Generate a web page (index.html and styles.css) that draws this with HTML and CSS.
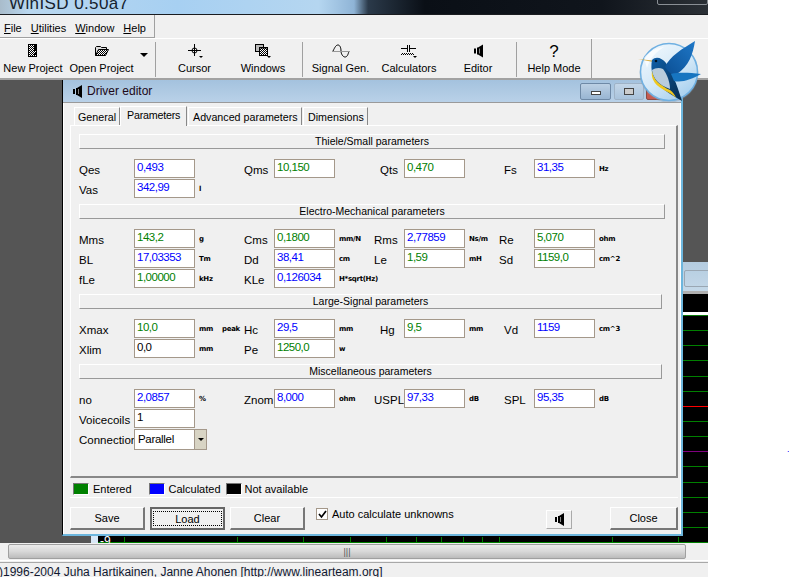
FILE: index.html
```html
<!DOCTYPE html>
<html lang="en">
<head>
<meta charset="utf-8">
<title>WinISD</title>
<link rel="stylesheet" href="styles.css">
</head>
<body>
<svg class="defs" width="0" height="0" aria-hidden="true">
  <defs>
    <pattern id="dither" width="2" height="2" patternUnits="userSpaceOnUse">
      <rect width="2" height="2" fill="#fff"/>
      <rect width="1" height="1" fill="#000"/>
      <rect x="1" y="1" width="1" height="1" fill="#000"/>
    </pattern>
    <g id="speaker">
      <path d="M0 4h2v5H0zM3 3h1l5-3v13l-5-3H3z" fill="#000"/>
      <path d="M5 4h1v5H5z" fill="#888"/>
    </g>
  </defs>
</svg>
<div class="app">
  <div class="titlebar"><span class="title-text">WinISD 0.50a7</span><span class="title-ctl"></span></div>
  <div class="menubar">
    <div class="menu">
      <span><u>F</u>ile</span><span><u>U</u>tilities</span><span><u>W</u>indow</span><span><u>H</u>elp</span>
    </div>
  </div>
  <div class="toolrow">
    <div class="toolbar">
      <div class="tool w-new">
        <svg class="ico" width="16" height="14" viewBox="0 0 16 14"><rect x="3.500" y="0.500" width="8" height="12" fill="url(#dither)" stroke="#000"/><path d="M9 1h2v6H9zM9 9h2v2H9z" fill="#000"/></svg>
        <span>New Project</span>
      </div>
      <div class="tool w-open">
        <svg class="ico" width="16" height="14" viewBox="0 0 16 14"><path d="M1.500 11.500V3.500l1-1h4l1 1h5v2" fill="#ddd" stroke="#000"/><path d="M1.500 11.500l3-6h10l-3 6z" fill="url(#dither)" stroke="#000"/></svg>
        <span>Open Project</span>
      </div>
      <div class="tool-arrow"><i class="caret"></i></div>
      <div class="tool w-cursor sep">
        <svg class="ico" width="16" height="14" viewBox="0 0 16 14"><path d="M7.500 0v12M1 6.500h13" stroke="#000"/><circle cx="7.500" cy="6.500" r="2.500" fill="none" stroke="#000"/><path d="M12 12h4l-2 2z" fill="#000"/></svg>
        <span>Cursor</span>
      </div>
      <div class="tool w-windows">
        <svg class="ico" width="16" height="14" viewBox="0 0 16 14"><rect x="0.500" y="0.500" width="8" height="7" fill="#bbb" stroke="#000"/><rect x="4.500" y="3.500" width="8" height="8" fill="url(#dither)" stroke="#000"/><path d="M4 3.500h9V4.500H4z" fill="#000"/><path d="M12 12h4l-2 2z" fill="#000"/></svg>
        <span>Windows</span>
      </div>
      <div class="tool w-signal sep">
        <svg class="ico" width="18" height="14" viewBox="0 0 18 14"><path d="M1 7C3 3 4 1 6 1s3 3 3 6 2 6 4 6 3-2 4-6" fill="none" stroke="#000"/><path d="M0 7.500h18" stroke="#999"/></svg>
        <span>Signal Gen.</span>
      </div>
      <div class="tool w-calc">
        <svg class="ico" width="18" height="14" viewBox="0 0 18 14"><path d="M1 4.500h6M10 4.500h6M7.500 1v7M9.500 1v7" stroke="#000"/><path d="M1 10.500h14" stroke="#000" stroke-dasharray="1 1"/><path d="M2 9.500h12" stroke="#000" stroke-dasharray="1 1"/><path d="M13 12h4l-2 2z" fill="#000"/></svg>
        <span>Calculators</span>
      </div>
      <div class="tool w-editor">
        <svg class="ico" width="9" height="13" viewBox="0 0 9 13"><use href="#speaker"/></svg>
        <span>Editor</span>
      </div>
      <div class="tool w-help sep">
        <span class="qmark">?</span>
        <span>Help Mode</span>
      </div>
    </div>
  </div>

  <div class="workspace">
    <section class="graph">
      <div class="graph-title"><i class="gbtn"></i><i class="gbtn"></i></div>
      <div class="graph-plot">
        <svg class="plot-lines" width="617" height="250" viewBox="0 0 617 250">
          <rect x="0" y="0" width="617" height="250" fill="#000"/>
          <rect x="0" y="18" width="617" height="3" fill="#fff"/>
          <rect x="0" y="21" width="617" height="1" fill="#0a7a0a"/>
          <path d="M0 36.500h617M0 51.500h617M0 66.500h617M0 82.500h617M0 97.500h617M0 127.500h617M0 142.500h617M0 172.500h617M0 188.500h617M0 203.500h617M0 218.500h617M0 233.500h617M0 248.500h617" stroke="#008000"/>
          <path d="M0 112.500h617" stroke="#f00"/>
          <path d="M0 157.500h617" stroke="#800080"/>
          <path d="M33.500 243v6M146.500 243v6M212.500 243v6M259.500 243v6M295.500 243v6M325.500 243v6M350.500 243v6M372.500 243v6M391.500 243v6M408.500 243v6M521.500 243v6M587.500 243v6" stroke="#008000"/>
        </svg>
        <span class="axis-strip"></span>
        <span class="axis-label">-9</span>
      </div>
    </section>

    <section class="dialog">
      <header class="dlg-title">
        <svg class="dlg-icon" width="9" height="13" viewBox="0 0 9 13"><use href="#speaker"/></svg>
        <span class="dlg-name">Driver editor</span>
        <span class="dlg-btn"><i class="b-min"></i></span>
        <span class="dlg-btn"><i class="b-max"></i></span>
        <span class="dlg-btn close"></span>
      </header>
      <div class="dlg-body">
        <div class="tabs">
          <span class="tab t1">General</span>
          <span class="tab active">Parameters</span>
          <span class="tab t3">Advanced parameters</span>
          <span class="tab t4">Dimensions</span>
        </div>
        <div class="page">
          <h3 class="sect">Thiele/Small parameters</h3>
          <div class="form">
            <label>Qes</label><span class="fld b">0,493</span><span class="unit"></span>
            <label>Qms</label><span class="fld g">10,150</span><span class="unit"></span>
            <label class="in6">Qts</label><span class="fld g">0,470</span><span class="unit"></span>
            <label>Fs</label><span class="fld b">31,35</span><span class="unit">Hz</span>
            <label>Vas</label><span class="fld b">342,99</span><span class="unit">l</span>
          </div>
          <h3 class="sect">Electro-Mechanical parameters</h3>
          <div class="form">
            <label>Mms</label><span class="fld g">143,2</span><span class="unit">g</span>
            <label>Cms</label><span class="fld g">0,1800</span><span class="unit">mm/N</span>
            <label>Rms</label><span class="fld b">2,77859</span><span class="unit">Ns/m</span>
            <label class="out5">Re</label><span class="fld g">5,070</span><span class="unit">ohm</span>
            <label>BL</label><span class="fld b">17,03353</span><span class="unit">Tm</span>
            <label>Dd</label><span class="fld b">38,41</span><span class="unit">cm</span>
            <label>Le</label><span class="fld g">1,59</span><span class="unit">mH</span>
            <label class="out5">Sd</label><span class="fld g">1159,0</span><span class="unit">cm^2</span>
            <label>fLe</label><span class="fld g">1,00000</span><span class="unit">kHz</span>
            <label>KLe</label><span class="fld b">0,126034</span><span class="unit">H*sqrt(Hz)</span>
          </div>
          <h3 class="sect short">Large-Signal parameters</h3>
          <div class="form">
            <label>Xmax</label><span class="fld g">10,0</span><span class="unit">mm<em>peak</em></span>
            <label>Hc</label><span class="fld b">29,5</span><span class="unit">mm</span>
            <label class="in6">Hg</label><span class="fld g">9,5</span><span class="unit">mm</span>
            <label>Vd</label><span class="fld b">1159</span><span class="unit">cm^3</span>
            <label>Xlim</label><span class="fld">0,0</span><span class="unit">mm</span>
            <label>Pe</label><span class="fld g">1250,0</span><span class="unit">w</span>
          </div>
          <h3 class="sect short">Miscellaneous parameters</h3>
          <div class="form">
            <label>no</label><span class="fld b">2,0857</span><span class="unit">%</span>
            <label>Znom</label><span class="fld b">8,000</span><span class="unit">ohm</span>
            <label>USPL</label><span class="fld b">97,33</span><span class="unit">dB</span>
            <label>SPL</label><span class="fld b">95,35</span><span class="unit">dB</span>
            <label>Voicecoils</label><span class="fld">1</span><span class="unit"></span>
            <label class="first-col">Connection</label>
            <span class="combo"><span class="combo-val">Parallel</span><span class="combo-btn"><i class="caret small"></i></span></span>
          </div>
        </div>
        <div class="legend">
          <span class="key"><i class="swatch green"></i>Entered</span>
          <span class="key k2"><i class="swatch blue"></i>Calculated</span>
          <span class="key k3"><i class="swatch black"></i>Not available</span>
        </div>
        <div class="actions">
          <button class="btn">Save</button>
          <button class="btn default"><span>Load</span></button>
          <button class="btn">Clear</button>
          <label class="check"><i class="box"><svg width="9" height="9" viewBox="0 0 9 9"><path d="M1 4l2.500 3L8 1" fill="none" stroke="#000" stroke-width="1.700"/></svg></i>Auto calculate unknowns</label>
          <button class="icon-btn"><svg width="9" height="13" viewBox="0 0 9 13"><use href="#speaker"/></svg></button>
          <button class="btn close-btn">Close</button>
        </div>
      </div>
    </section>

    <svg class="logo" width="90" height="80" viewBox="0 0 90 80">
      <defs>
        <linearGradient id="disc" x1="0" y1="0" x2="0.7" y2="1">
          <stop offset="0" stop-color="#f4fafe"/><stop offset="0.6" stop-color="#d4e8f7"/><stop offset="1" stop-color="#a6d0ef"/>
        </linearGradient>
        <linearGradient id="wing" x1="1" y1="0" x2="0" y2="1">
          <stop offset="0" stop-color="#1f78c8"/><stop offset="1" stop-color="#0b4f94"/>
        </linearGradient>
        <linearGradient id="tail" x1="0" y1="0" x2="1" y2="1">
          <stop offset="0" stop-color="#0f5fa8"/><stop offset="1" stop-color="#052c4e"/>
        </linearGradient>
      </defs>
      <circle cx="49" cy="43" r="29.500" fill="#8a97a3" opacity=".35"/>
      <circle cx="49" cy="42" r="28.500" fill="url(#disc)" stroke="#6fb0e2" stroke-width="1.500"/>
      <path d="M24 28C28 22 36 18 44 17C36 22 30 28 27 38z" fill="#fff" opacity=".7"/>
      <path d="M18 29L33 30.500L33 32z" fill="#d9b04a"/>
      <path d="M32 30C36 26 42 28 46 33C52 42 56 52 62 71C54 66 46 62 40 56C33 50 30 40 32 30z" fill="url(#tail)"/>
      <path d="M32 40C33 48 38 55 50 59C50 52 47 44 43 39C39 37 35 38 32 40z" fill="#b9ccdc"/>
      <path d="M32 41C33 50 41 56 50 60C53 62 55 65 56 68C52 63 44 61 38 56C33 52 31 46 32 41z" fill="#f0c81e"/>
      <path d="M45 37C50 26 62 19 75 11C73 24 69 36 57 44C53 46 50 44 45 37z" fill="url(#wing)"/>
      <path d="M51 44C60 42 70 43 81 44C72 49 62 53 54 51z" fill="#1775c0"/>
      <circle cx="36" cy="31" r="1.300" fill="#012"/>
    </svg>
  </div>

  <div class="scrollrow"><div class="scrollbar"><span class="grip">|||</span></div></div>
  <div class="status"><span>(c)1996-2004 Juha Hartikainen, Janne Ahonen [http://www.linearteam.org]</span></div>
</div>
<span class="stray">.</span>
</body>
</html>
```
FILE: styles.css
```css
* { box-sizing: border-box; }
html, body { margin: 0; padding: 0; }
body {
  position: relative;
  width: 789px;
  height: 577px;
  overflow: hidden;
  background: #fff;
  font: 11px "Liberation Sans", Arial, sans-serif;
  color: #000;
}
.defs { position: absolute; }
.app {
  width: 708px;
  height: 577px;
  display: flex;
  flex-direction: column;
  background: #f0f0f0;
  overflow: hidden;
}
.titlebar {
  height: 15px;
  flex: none;
  position: relative;
  overflow: hidden;
  background: linear-gradient(90deg, #a9bccb 0, #b9d7ef 4%, #a7d0f2 25%, #b5d6f0 45%, #8fb4d6 50%, #2b3a4a 52%, #0a0f16 60%, #10151c 85%, #2b3036 100%);
  border-bottom: 1px solid #1a1c20;
}
.title-text {
  position: absolute;
  left: 9px;
  top: -6px;
  font-size: 17px;
  letter-spacing: .4px;
  color: #15222e;
}
.title-ctl {
  position: absolute;
  left: 657px;
  top: -10px;
  width: 51px;
  height: 15px;
  border: 1px solid #8a8f95;
  border-radius: 2px;
}
.menubar {
  height: 24px;
  flex: none;
  background: #f0f0f0;
  border-bottom: 1px solid #fff;
}
.menu {
  width: 155px;
  height: 23px;
  display: flex;
  gap: 9px;
  align-items: center;
  padding: 3px 0 0 4px;
  font-size: 11px;
  border-right: 1px solid #a0a0a0;
  border-bottom: 1px solid #a0a0a0;
}
.toolrow {
  height: 41px;
  flex: none;
  background: #f0f0f0;
  border-bottom: 2px solid #a2a2a2;
}
.toolbar {
  width: 592px;
  height: 39px;
  display: flex;
  border-right: 1px solid #a0a0a0;
}
.tool {
  height: 35px;
  margin-top: 3px;
  display: flex;
  flex-direction: column;
  align-items: center;
  font-size: 11px;
  white-space: nowrap;
  position: relative;
}
.tool .ico { margin: 2px 0 4px; height: 14px; flex: none; }
.tool.sep { border-left: 1px solid #a0a0a0; }
.w-new { width: 66px; }
.w-open { width: 71px; }
.tool-arrow { width: 18px; padding: 14px 0 0 3px; }
.caret {
  display: block;
  width: 0;
  height: 0;
  border-left: 4px solid transparent;
  border-right: 4px solid transparent;
  border-top: 4px solid #000;
}
.caret.small { border-left-width: 3px; border-right-width: 3px; border-top-width: 3px; }
.w-cursor { width: 78px; }
.w-windows { width: 69px; padding-right: 9px; }
.w-signal { width: 76px; }
.w-calc { width: 62px; }
.w-editor { width: 76px; }
.w-help { width: 75px; }
.qmark { height: 20px; font-size: 17px; line-height: 19px; }

.workspace {
  position: relative;
  flex: none;
  height: 463px;
  background: #555;
}
.graph {
  position: absolute;
  left: 91px;
  top: 182px;
  width: 617px;
  height: 281px;
  background: #000;
}
.graph-title {
  display: flex;
  justify-content: flex-end;
  gap: 3px;
  padding: 2px 0 0 0;
  background: linear-gradient(#b4cce0, #c4d8e8);
  border-bottom: 3px solid #b0b0b0;
  height: 32px;
}
.gbtn {
  width: 26px;
  height: 17px;
  margin-top: 6px;
  border: 1px solid #9aa7b3;
  border-radius: 2px;
}
.gbtn:last-child { margin-right: -2px; }
.graph-plot { position: relative; height: 249px; overflow: hidden; }
.plot-lines { display: block; }
.axis-strip {
  position: absolute;
  left: 0;
  bottom: 0;
  width: 7px;
  height: 7px;
  background: #d9e8f6;
}
.axis-label {
  position: absolute;
  left: 9px;
  bottom: -5px;
  color: #fff;
  font-size: 12px;
}
.dialog {
  position: absolute;
  left: 62px;
  top: 0;
  width: 621px;
  height: 456px;
  background: #f0f0f0;
  border-left: 1px solid #000;
  border-right: 2px solid #6db6dd;
  border-bottom: 2px solid #6db6dd;
  display: flex;
  flex-direction: column;
}
.dlg-title {
  height: 23px;
  flex: none;
  display: flex;
  align-items: center;
  padding-left: 10px;
  background: linear-gradient(#a4c2de, #b9d1e8);
  border-bottom: 1px solid #9a9a9a;
}
.dlg-icon { flex: none; }
.dlg-name {
  margin-left: 5px;
  flex: 1;
  font-size: 12px;
  color: #200818;
}
.dlg-btn {
  width: 31px;
  height: 17px;
  margin-right: 3px;
  display: flex;
  align-items: center;
  justify-content: center;
  border: 1px solid #6e89a6;
  border-radius: 2px;
  background: linear-gradient(#bcd0e4, #98b5d2);
}
.dlg-btn + .dlg-btn { border-color: #9fb3c7; background: linear-gradient(#c3d6e8, #a9c3dc); width: 30px; margin-right: 2px; }
.dlg-btn.close { border-color: #8a4a44; background: #c75a50; margin-right: 4px; width: 31px; }
.b-min { width: 10px; height: 4px; border: 1px solid #444; background: #fff; margin-top: 4px; }
.b-max { width: 10px; height: 7px; border: 1px solid #444; background: #ccc; }
.dlg-body { flex: 1; padding: 0 2px 0 6px; display: flex; flex-direction: column; background: #f0f0f0; border-left: 1px solid #fff; border-right: 1px solid #fff; }
.tabs { height: 22px; display: flex; align-items: flex-end; padding-left: 4px; }
.tab {
  height: 18px;
  padding: 3px 5px 0 3px;
  white-space: nowrap;
  border-left: 1px solid #fff;
  border-top: 1px solid #fff;
  border-right: 1px solid #888;
  font-size: 10.700px;
}
.t1 { width: 46px; }
.tab.active {
  width: 67px;
  height: 20px;
  padding: 2px 0 0 6px;
  position: relative;
  top: 1px;
  z-index: 1;
  background: #f0f0f0;
  letter-spacing: -.2px;
}
.t3 { width: 114px; padding-left: 4px; margin-left: 1px; }
.t4 { width: 65px; padding-left: 4px; margin-left: 1px; }
.page {
  height: 353px;
  flex: none;
  padding: 8px 0 0 8px;
  border: 1px solid;
  border-color: #fff #888 #888 #fff;
  border-width: 1px 2px 2px 1px;
}
.sect {
  width: 586px;
  height: 15px;
  margin: 0 0 10px;
  font-size: 10.500px;
  font-weight: 400;
  line-height: 13px;
  text-align: center;
  border-top: 1px solid #fff;
  border-left: 1px solid #fff;
  border-right: 1px solid #999;
  border-bottom: 1px solid #999;
}
.sect.short { width: 583px; }
.form {
  display: grid;
  grid-template-columns: 55px 61px 49px 30px 61px 39px 30px 61px 39px 30px 61px 60px;
  grid-auto-rows: 20px;
  margin-bottom: 5px;
  min-height: 40px;
}
.form label { padding-top: 5px; white-space: nowrap; font-size: 11.500px; }
.form .in6 { padding-left: 6px; }
.form .out5 { margin-left: -5px; }
.form .first-col { grid-column: 1; }
.fld {
  height: 19px;
  background: #fff;
  border: 1px solid #a4988a;
  padding: 1px 0 0 2px;
  font-size: 11.500px;
  letter-spacing: -.5px;
}
.fld.g { color: #008000; }
.fld.b { color: #0000ff; }
.unit {
  padding: 6px 0 0 4px;
  font: 7px "DejaVu Sans", sans-serif;
  font-weight: 700;
  letter-spacing: -.3px;
  white-space: nowrap;
}
.unit em { font-style: normal; margin-left: 9px; }
.combo {
  grid-column: 2 / span 2;
  width: 73px;
  height: 21px;
  display: flex;
  background: #fff;
  border: 1px solid #a4988a;
}
.combo-val { flex: 1; padding: 3px 0 0 3px; font-size: 11.500px; letter-spacing: -.3px; }
.combo-btn { width: 12px; background: #d8d4c4; border-left: 1px solid #a4988a; display: flex; align-items: center; justify-content: center; }
.legend {
  height: 20px;
  display: flex;
  align-items: center;
  padding: 2px 0 0 3px;
  border-bottom: 1px solid #fff;
  font-size: 11px;
}
.key { display: flex; align-items: center; gap: 4px; }
.k2 { margin-left: 17px; }
.k3 { margin-left: 5px; gap: 3px; }
.swatch { width: 16px; height: 12px; border: 1px solid; border-color: #777 #fff #fff #777; }
.swatch.green { background: #008000; }
.swatch.blue { background: #0000ff; }
.swatch.black { background: #000; }
.actions {
  display: flex;
  align-items: flex-start;
  padding-top: 9px;
}
.btn {
  width: 75px;
  height: 23px;
  margin: 0 5px 0 0;
  padding: 0;
  background: #f0f0f0;
  font: 11px "Liberation Sans", Arial, sans-serif;
  border: 1px solid;
  border-color: #fff #777 #777 #fff;
  border-width: 1px 2px 2px 1px;
}
.btn.default { border: 2px solid #666; }
.btn.default span { display: block; margin: 1px; padding-top: 1px; height: 15px; border: 1px dotted #000; }
.check { display: flex; align-items: center; gap: 4px; margin: 1px 0 0 6px; width: 230px; font-size: 11px; }
.box { width: 12px; height: 12px; background: #fff; border: 1px solid #a4988a; display: flex; align-items: center; justify-content: center; }
.icon-btn {
  width: 26px;
  height: 19px;
  margin: 3px 38px 0 0;
  padding: 0;
  display: flex;
  align-items: center;
  justify-content: center;
  background: #f0f0f0;
  border: 1px solid;
  border-color: #fff #aaa #aaa #fff;
}
.close-btn { width: 68px; margin-right: 0; }
.logo { position: absolute; left: 620px; top: -50px; }
.scrollrow {
  height: 18px;
  flex: none;
  padding: 1px 22px 2px 8px;
  background: #f0f0f0;
  border-bottom: 1px solid #fff;
}
.scrollbar {
  height: 15px;
  background: linear-gradient(#ececec, #d8d8d8 50%, #bcbcbc);
  border: 1px solid #a0a0a0;
  border-radius: 2px;
  text-align: center;
}
.grip { font-size: 9px; line-height: 13px; color: #555; }
.status {
  flex: 1;
  min-height: 0;
  overflow: hidden;
  border-top: 1px solid #a8a8a8;
  font-size: 12px;
  color: #101830;
  line-height: 15px;
  white-space: nowrap;
  margin-top: 1px;
}
.status span { margin-left: -11px; display: inline-block; position: relative; top: 2px; }
.stray { position: absolute; left: 787px; top: 444px; color: #00f; font-size: 9px; }
```
